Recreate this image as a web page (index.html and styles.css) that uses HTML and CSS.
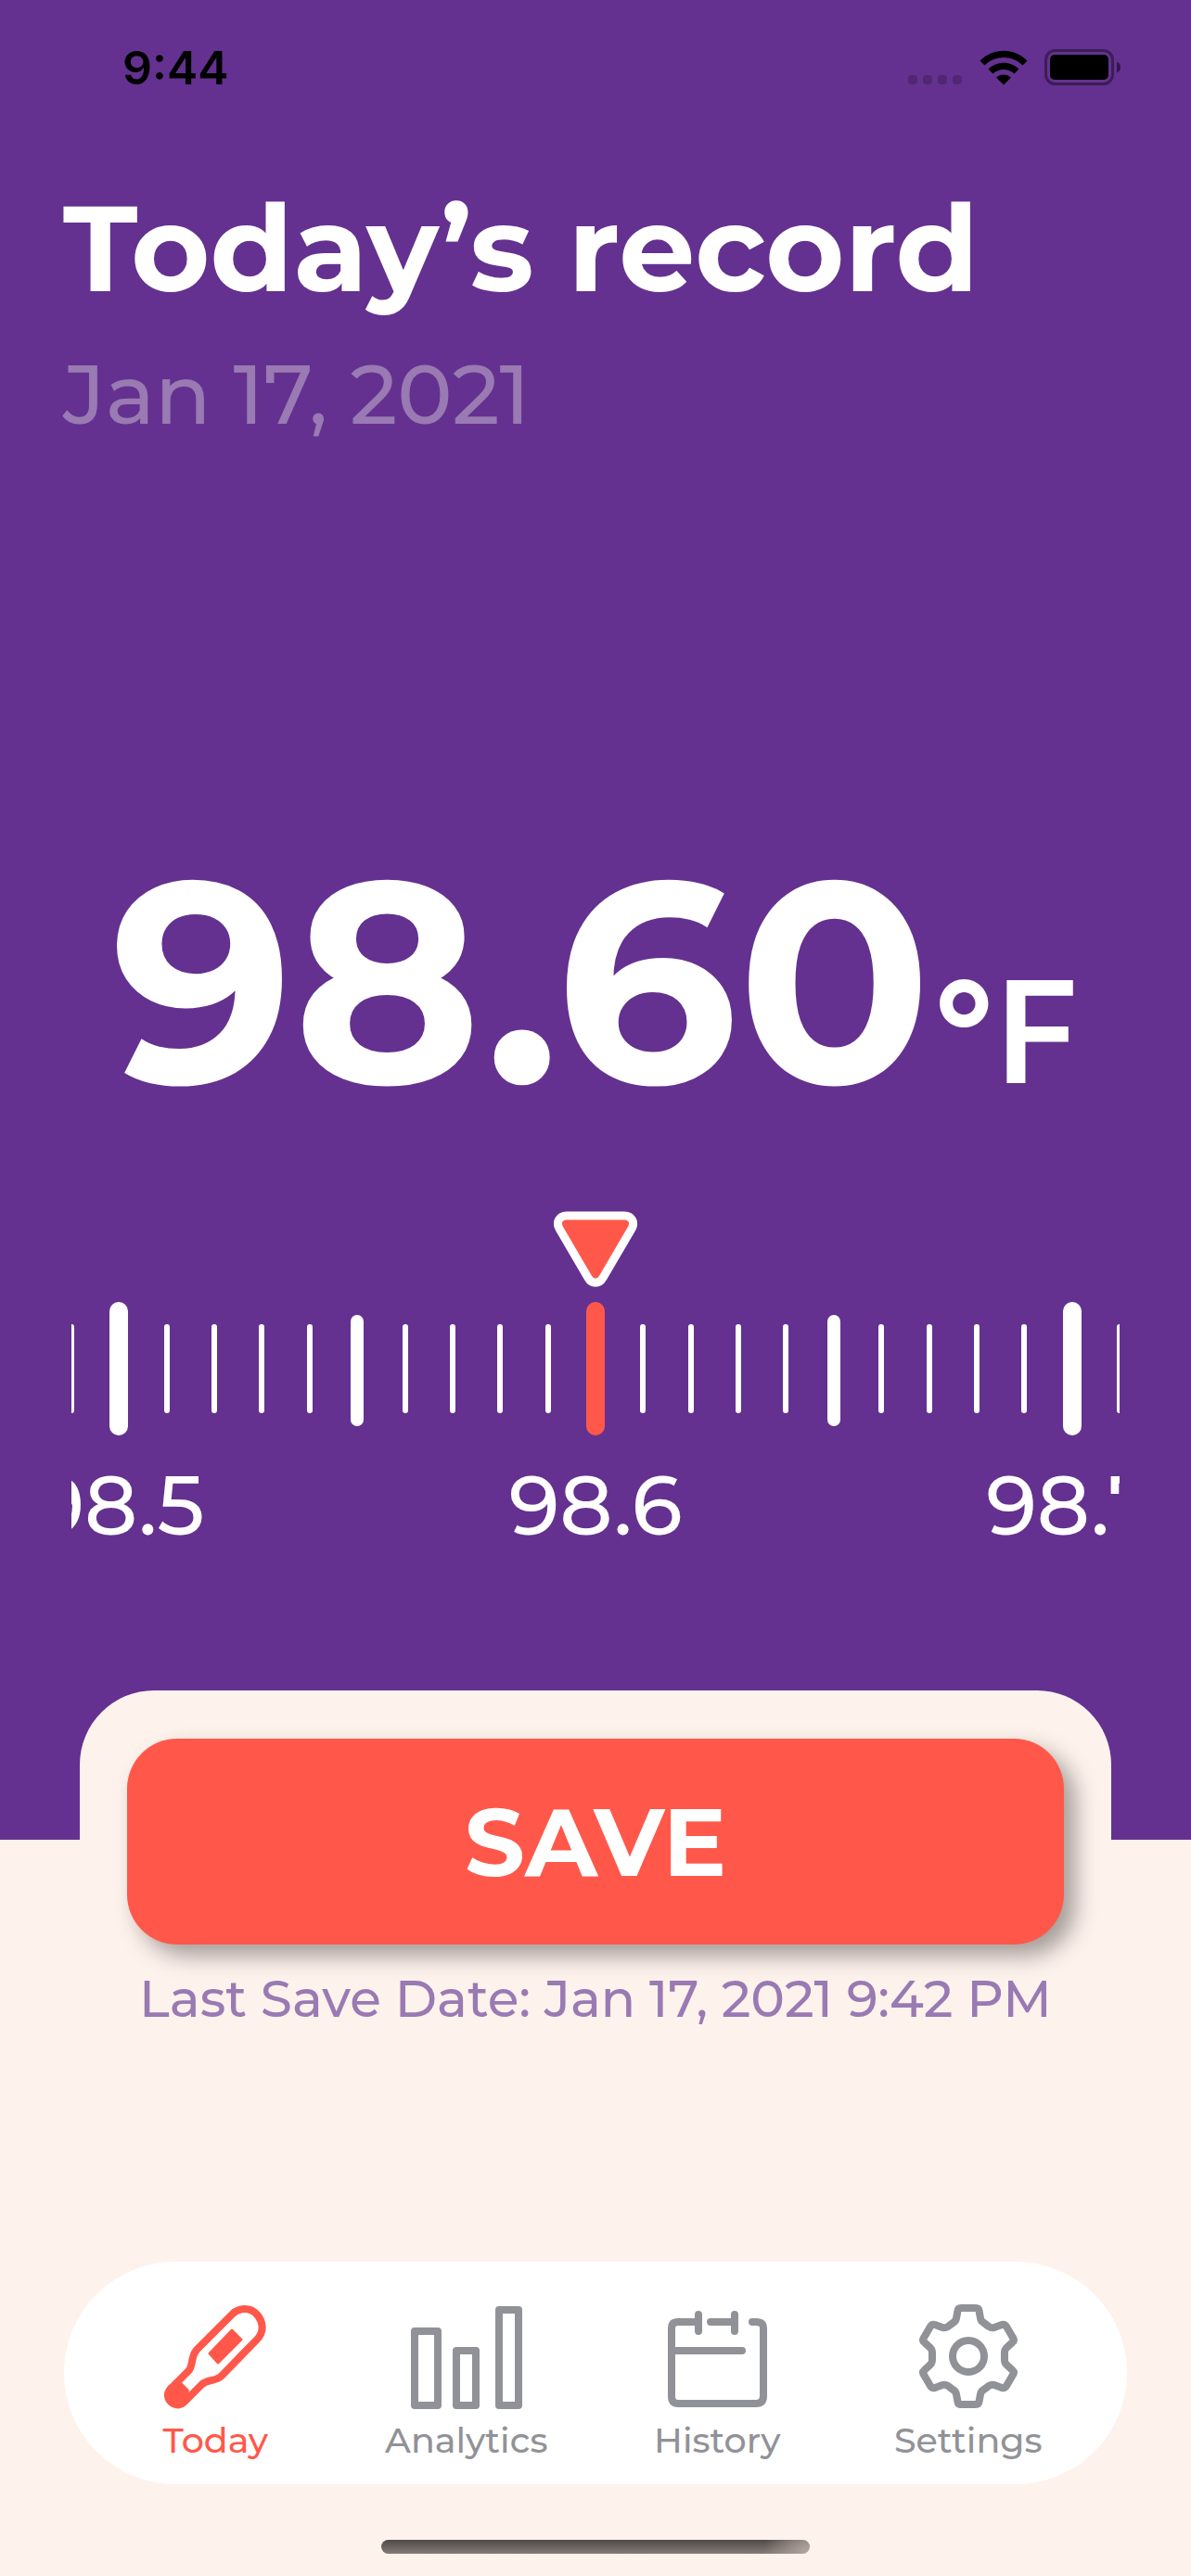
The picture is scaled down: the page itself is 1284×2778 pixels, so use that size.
FILE: index.html
```html
<!DOCTYPE html>
<html lang="en">
<head>
    <meta charset="UTF-8">
    <meta name="viewport" content="width=device-width, initial-scale=1.0">
    <title>Today's record</title>
    <link rel="stylesheet" href="styles.css">
</head>
<body>
    <main class="hero">
        <div class="status-bar">
            <span class="time">9:44</span>
            <div class="status-icons">
                <svg class="dots" width="60" height="38" viewBox="0 0 60 38">
                    <rect x="1" y="27" width="10" height="10" rx="4"/>
                    <rect x="17" y="27" width="10" height="10" rx="4"/>
                    <rect x="33" y="27" width="10" height="10" rx="4"/>
                    <rect x="49" y="27" width="10" height="10" rx="4"/>
                </svg>
                <svg class="wifi" width="52" height="38" viewBox="0 0 52 38">
                    <path d="M0.500 11.500C14.500-3 37.500-3 51.500 11.500L46.500 16.500C35 5.300 17 5.300 5.500 16.500Z"/>
                    <path d="M9.500 20.500C18.500 11.500 33.500 11.500 42.500 20.500L37.500 25.500C31 19.500 21 19.500 14.500 25.500Z"/>
                    <path d="M18 29.500C22.500 25.500 29.500 25.500 34 29.500L26 37.500Z"/>
                </svg>
                <svg class="battery" width="82" height="40" viewBox="0 0 82 40">
                    <rect class="battery-case" x="1.500" y="1.500" width="72" height="36" rx="10"/>
                    <rect x="6" y="6" width="63" height="27" rx="5"/>
                    <path class="battery-tip" d="M78 13.500Q82 15 82 19.500T78 25.500Z"/>
                </svg>
            </div>
        </div>

        <header class="header">
            <h1>Today’s record</h1>
            <p class="date">Jan 17, 2021</p>
        </header>

        <div class="reading">
            <span class="value" id="value">98.60</span><span class="unit">°F</span>
        </div>

        <div class="picker">
            <svg class="pointer" width="90" height="82" viewBox="0 0 90 82">
                <path d="M14 5H76C84 5 88 12 84 19L53 72C49 79 41 79 37 72L6 19C2 12 6 5 14 5Z"/>
            </svg>
            <div class="ruler" id="ruler"></div>
            <input class="range" id="range" type="range" min="9500" max="10800" value="9860" aria-label="Temperature">
        </div>
    </main>

    <section class="save-card">
        <button class="save-btn" id="save-btn" type="button">SAVE</button>
        <p class="last-save">Last Save Date: Jan 17, 2021 9:42 PM</p>
    </section>

    <nav class="tab-bar">
        <a class="tab active" href="#today">
            <svg width="112" height="114" viewBox="0 0 112 114">
                <path d="M36 49L74 11C82 3 94 3 101 11S109 30 101 38L63 77C56 84 48 80 41 87L22 106C16 112 4 106 5 97Q5 94 9 90L27 72C33 66 29 57 36 49Z"/>
                <path class="solid" d="M17 87L24 94L19 104L10 106L5 98L8 91Z"/>
                <path class="fill" d="M73 27Q74 26 75 27L85 37Q86 38 85 39L60 64Q59 65 58 64L49 54Q48 53 49 52Z"/>
            </svg>
            Today
        </a>
        <a class="tab" href="#analytics">
            <svg width="126" height="114" viewBox="0 0 126 114">
                <rect x="7" y="29" width="25" height="80"/>
                <rect x="52" y="50" width="21" height="59"/>
                <rect x="98" y="6" width="21" height="103"/>
            </svg>
            Analytics
        </a>
        <a class="tab" href="#history">
            <svg width="112" height="114" viewBox="0 0 112 114">
                <path d="M35 19H14Q7 19 7 26V99Q7 107 14 107H98Q106 107 106 99V26Q106 19 98 19H94"/>
                <path d="M36 11V29M49 19H75M75 11V29M7 50H83"/>
            </svg>
            History
        </a>
        <a class="tab" href="#settings">
            <svg width="110" height="114" viewBox="0 0 110 114">
                <path d="M55 4H63Q66 4 66.500 7L68 15Q68.500 18 71 19.500L77 24Q80 26 83 25L91 22Q94 21 96 24L103 36Q105 39 102.500 41L96 47Q94 49 94 52V60Q94 63 96 65L102.500 71Q105 73 103 76L96 88Q94 91 91 90L83 87Q80 86 77 88L71 92.500Q68.500 94 68 97L66.500 105Q66 108 63 108H47Q44 108 43.500 105L42 97Q41.500 94 39 92.500L33 88Q30 86 27 87L19 90Q16 91 14 88L7 76Q5 73 7.500 71L14 65Q16 63 16 60V52Q16 49 14 47L7.500 41Q5 39 7 36L14 24Q16 21 19 22L27 25Q30 26 33 24L39 19.500Q41.500 18 42 15L43.500 7Q44 4 47 4Z"/>
                <circle cx="55" cy="56" r="17"/>
            </svg>
            Settings
        </a>
    </nav>
    <div class="home-indicator"></div>

    <script>
        const ruler = document.getElementById('ruler');
        const range = document.getElementById('range');

        // values are in hundredths of a degree, one tick each
        function drawRuler(current) {
            ruler.innerHTML = '';
            for (let v = current - 11; v <= current + 11; v++) {
                const cell = document.createElement('div');
                cell.className = 'cell';
                const tick = document.createElement('span');
                tick.className = 'tick';
                if (v % 10 === 0) {
                    tick.classList.add('large');
                } else if (v % 5 === 0) {
                    tick.classList.add('medium');
                }
                if (v === current) {
                    tick.classList.add('current');
                }
                cell.appendChild(tick);
                if (v % 10 === 0) {
                    const label = document.createElement('span');
                    label.className = 'label';
                    label.innerText = (v / 100).toFixed(1);
                    cell.appendChild(label);
                }
                ruler.appendChild(cell);
            }
            document.getElementById('value').innerText = (current / 100).toFixed(2);
        }

        range.addEventListener('input', () => {
            drawRuler(Number(range.value));
        });

        drawRuler(Number(range.value));
    </script>
</body>
</html>
```
FILE: styles.css
```css
* {
    box-sizing: border-box;
}
body {
    margin: 0;
    min-height: 100vh;
    display: flex;
    flex-direction: column;
    background-color: #fef2ec;
    font-family: Montserrat, Inter, "Open Sans", sans-serif;
    color: white;
}
h1,
p {
    margin: 0;
}
.hero {
    background-color: #643190;
    padding-bottom: 300px;
}
.status-bar {
    display: flex;
    justify-content: space-between;
    align-items: center;
    height: 146px;
    padding: 0 76px 0 132px;
    color: black;
}
.time {
    font-family: Inter, sans-serif;
    font-size: 50px;
    font-weight: 600;
}
.status-icons {
    display: flex;
    align-items: center;
    gap: 18px;
}
.dots {
    opacity: 0.2;
}
.battery-case {
    fill: none;
    stroke: black;
    stroke-width: 3;
    opacity: 0.4;
}
.battery-tip {
    opacity: 0.5;
}
.header {
    padding: 42px 68px 0;
}
h1 {
    font-size: 130px;
    font-weight: 700;
    line-height: 160px;
}
.date {
    font-size: 89px;
    font-weight: 500;
    line-height: 110px;
    margin-top: 22px;
    color: #997ab3;
}
.reading {
    display: flex;
    justify-content: center;
    align-items: baseline;
    margin-top: 398px;
    line-height: 360px;
    white-space: nowrap;
}
.value {
    font-size: 308px;
    font-weight: 700;
}
.unit {
    font-family: Inter, sans-serif;
    font-size: 153px;
    font-weight: 600;
}
.picker {
    position: relative;
    margin: 13px 77px 0;
}
.pointer {
    display: block;
    margin: 0 auto 16px;
    fill: #ff584a;
    stroke: white;
    stroke-width: 9;
}
.ruler {
    display: flex;
    justify-content: center;
    overflow: hidden;
    height: 280px;
}
.cell {
    flex: 0 0 calc(100% / 22);
    min-width: 0;
    display: flex;
    flex-direction: column;
    align-items: center;
}
.tick {
    flex: none;
    width: 6px;
    height: 96px;
    margin: 24px 0;
    border-radius: 10px;
    background-color: white;
}
.tick.medium {
    width: 14px;
    height: 120px;
    margin: 14px 0;
}
.tick.large {
    width: 20px;
    height: 144px;
    margin: 0;
}
.tick.current {
    background-color: #ff584a;
}
.label {
    margin-top: 20px;
    font-size: 89px;
    font-weight: 500;
    line-height: 110px;
}
.range {
    position: absolute;
    inset: 0;
    width: 100%;
    margin: 0;
    opacity: 0;
    cursor: pointer;
}
.save-card {
    margin: -161px 86px 0;
    padding: 52px 51px 0;
    border-radius: 80px 80px 0 0;
    background-color: #fef2ec;
    text-align: center;
}
.save-btn {
    width: 100%;
    height: 222px;
    border: none;
    border-radius: 54px;
    background-color: #ff584a;
    box-shadow: 12px 12px 24px rgba(0, 0, 0, 0.36);
    color: white;
    font-family: inherit;
    font-size: 102px;
    font-weight: 700;
    cursor: pointer;
}
.last-save {
    margin-top: 26px;
    font-size: 55px;
    font-weight: 500;
    line-height: 66px;
    color: #997ab3;
}
.tab-bar {
    display: flex;
    height: 240px;
    margin: auto 69px 0;
    padding: 46px 36px 0 28px;
    border-radius: 120px;
    background-color: white;
}
.tab {
    flex: 1;
    display: flex;
    flex-direction: column;
    align-items: center;
    gap: 9px;
    color: #919297;
    font-size: 38px;
    font-weight: 500;
    line-height: 48px;
    text-decoration: none;
}
.tab svg {
    fill: none;
    stroke: currentColor;
    stroke-width: 8;
    stroke-linecap: round;
    stroke-linejoin: round;
}
.tab .solid {
    fill: currentColor;
}
.tab .fill {
    fill: currentColor;
    stroke: none;
}
.tab.active {
    color: #ff584a;
}
.home-indicator {
    width: 36%;
    height: 15px;
    margin: 60px auto 24px;
    border-radius: 8px;
    background: radial-gradient(circle at 100% 100%, #b5a8a2, transparent 50px), linear-gradient(#4f4a46, #857a75);
}
```
